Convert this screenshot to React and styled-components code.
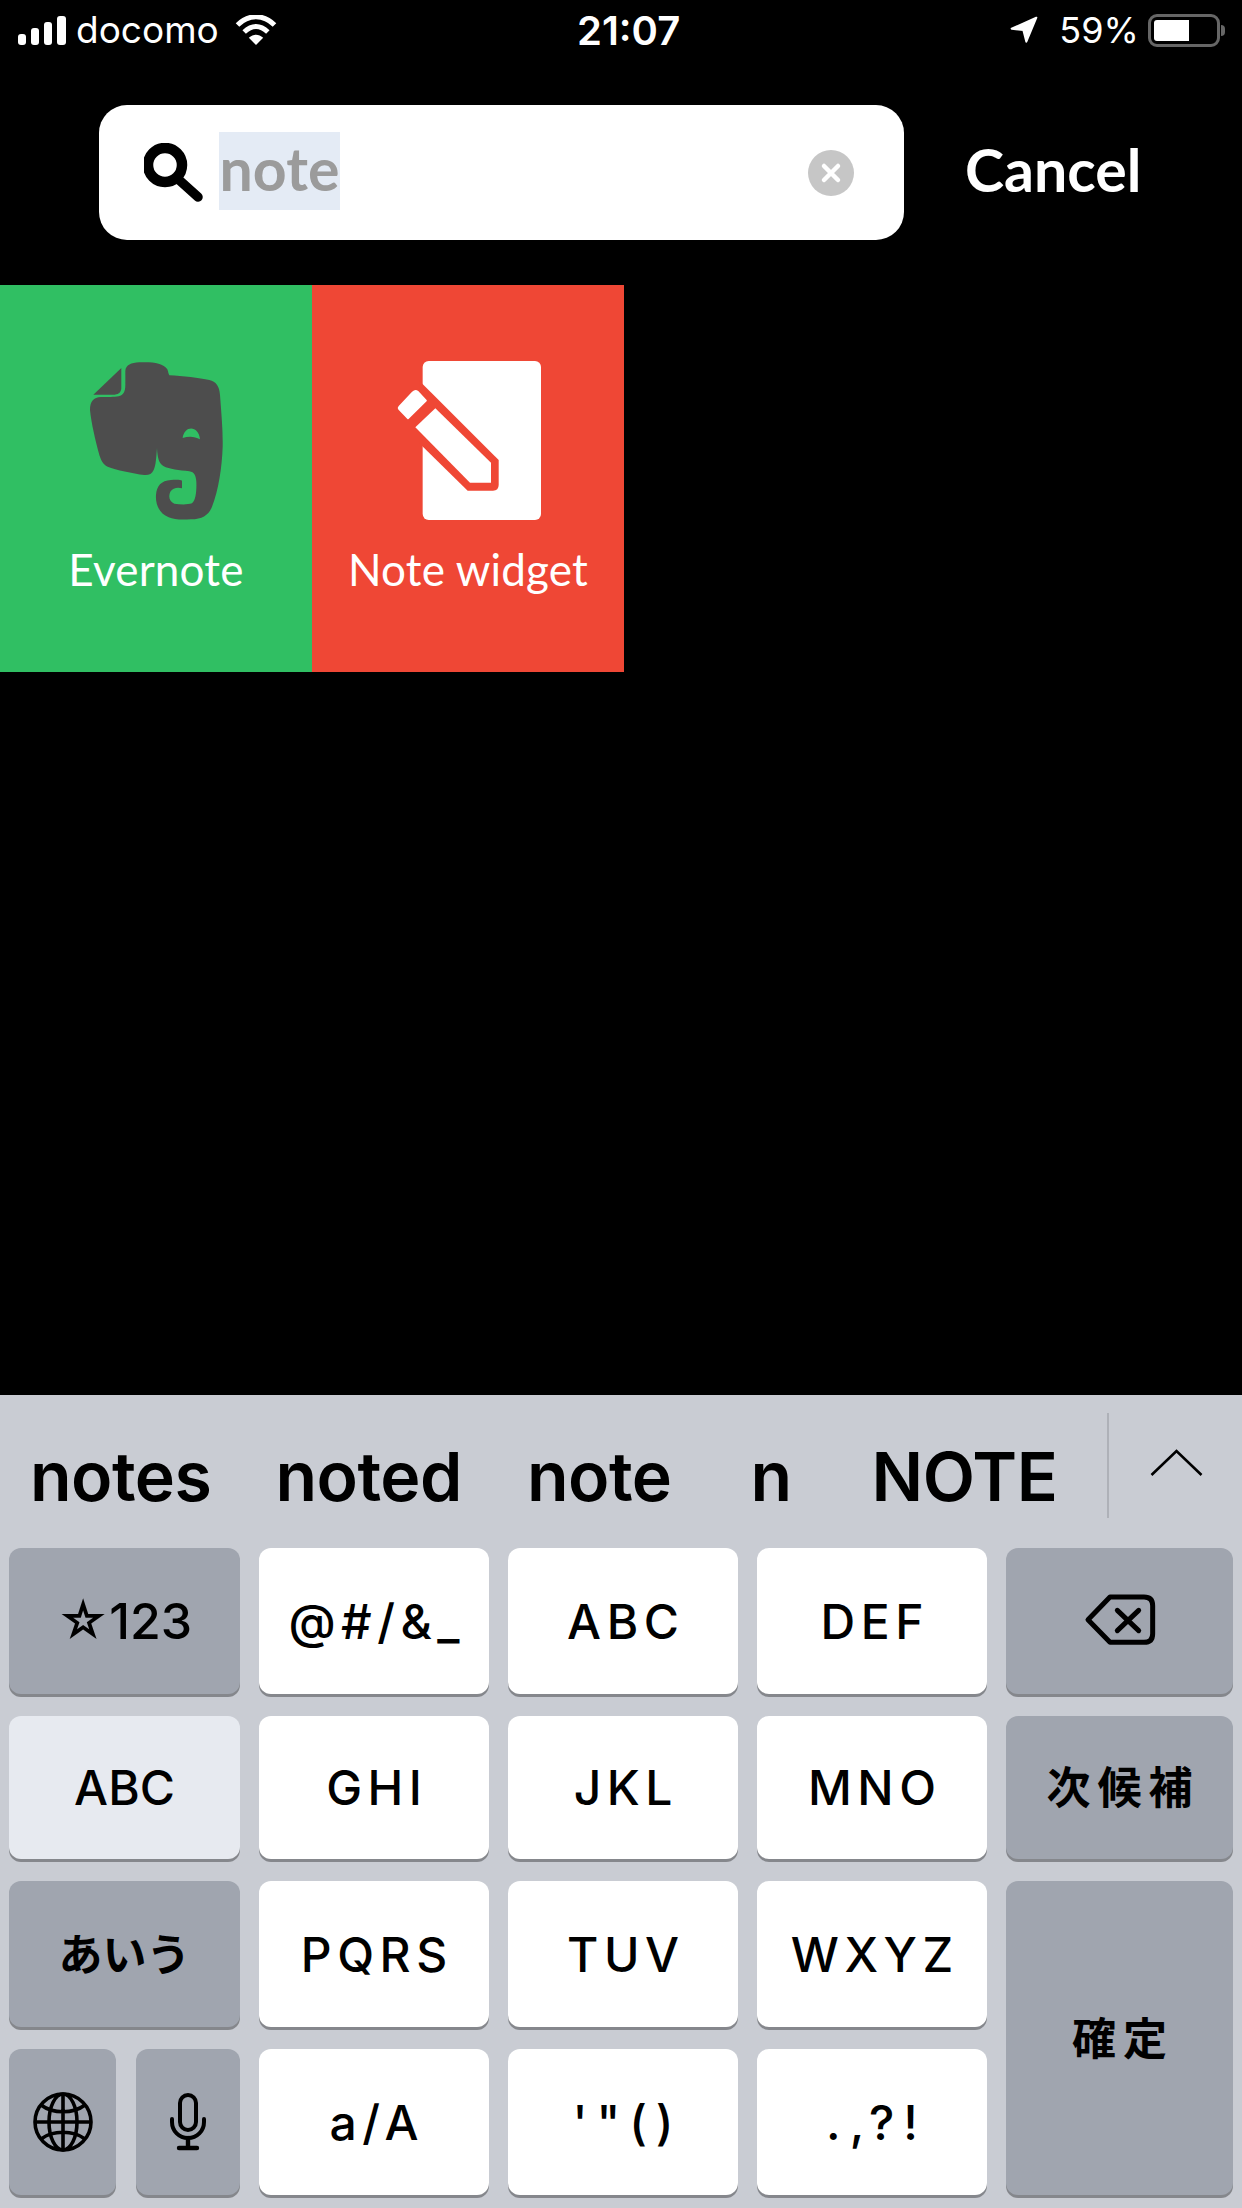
import React from 'react';
import styled, { createGlobalStyle } from 'styled-components';

const GlobalStyle = createGlobalStyle`
  html, body {
    margin: 0;
    padding: 0;
    background: #000;
    font-family: Inter, "Noto Sans CJK JP", sans-serif;
  }
`;

const suggestions = [
  { text: 'notes', gap: 30 },
  { text: 'noted', gap: 64 },
  { text: 'note', gap: 65 },
  { text: 'n', gap: 79 },
  { text: 'NOTE', gap: 80 },
];

const SignalIcon = () => (
  <svg width="48" height="29" viewBox="0 0 48 29">
    <rect x="0" y="18" width="8" height="11" rx="3" fill="#fff" />
    <rect x="13" y="12" width="8" height="17" rx="3" fill="#fff" />
    <rect x="26" y="6" width="8" height="23" rx="3" fill="#fff" />
    <rect x="39" y="0" width="9" height="29" rx="3" fill="#fff" />
  </svg>
);

const WifiIcon = () => (
  <svg width="42" height="30" viewBox="0 0 125 90">
    <path d="M7 30C40 -3 85 -3 118 30" fill="none" stroke="#fff" strokeWidth="15" />
    <path d="M27 51C50 29 75 29 98 51" fill="none" stroke="#fff" strokeWidth="15" />
    <path d="M62.5 90L41 68C55 56 70 56 84 68Z" fill="#fff" />
  </svg>
);

const LocationIcon = () => (
  <svg width="30" height="30" viewBox="0 0 90 90">
    <path d="M82 8L8 41L43 45L52 80Z" fill="#fff" stroke="#fff" strokeWidth="6" strokeLinejoin="round" />
  </svg>
);

const SearchIcon = () => (
  <svg width="60" height="60" viewBox="0 0 60 60">
    <circle cx="21" cy="22" r="17" fill="none" stroke="#000" strokeWidth="10.5" />
    <path d="M34 36L54 54" stroke="#000" strokeWidth="9.5" strokeLinecap="round" />
  </svg>
);

const ClearIcon = () => (
  <svg width="46" height="46" viewBox="0 0 46 46">
    <circle cx="23" cy="23" r="23" fill="#c6c6c6" />
    <path d="M16 16L30 30M30 16L16 30" stroke="#fff" strokeWidth="4.5" strokeLinecap="round" />
  </svg>
);

const ElephantIcon = () => (
  <svg width="160" height="180" viewBox="0 0 480 540">
    <path
      fillRule="evenodd"
      fill="#4d4d4d"
      d="M148 62C150 45 165 38 190 37C225 35 262 38 274 58C277 65 277 72 280 76C320 78 370 84 400 90C420 95 430 108 432 135C436 190 441 240 440 290C438 350 428 420 408 470C398 495 380 508 345 508C320 509 295 510 278 502C250 490 238 465 240 435C242 408 255 392 285 390C300 389 315 389 318 392L318 415C305 411 290 414 283 425C277 438 279 455 295 461C315 464 335 464 348 460C360 452 362 420 361 395C360 378 355 366 340 364C310 360 280 358 262 348C248 340 244 320 243 294C241 320 240 345 233 360C228 372 218 376 205 375C170 370 120 360 95 350C80 343 75 330 70 315C58 270 46 220 42 180C42 155 52 142 75 141C95 140 115 142 128 139C142 136 148 125 148 105Z M320 264C325 225 368 225 372 268C355 258 338 258 320 264Z"
    />
    <path d="M136 54L136 112C136 126 130 133 116 134L52 134Z" fill="#4d4d4d" />
  </svg>
);

const NoteIcon = () => (
  <svg width="165" height="180" viewBox="0 0 495 540">
    <rect x="110" y="33" width="355" height="477" rx="18" fill="#fff" />
    <path d="M100 92L338 330L338 405Q338 422 321 422L245 422L100 280Z" fill="#ef4735" />
    <path d="M148 175L315 338L315 398L252 398L88 232Z" fill="#fff" />
    <path
      d="M40 170L80 127Q88 120 95 125L120 152L66 205L40 178Q36 174 40 170Z"
      fill="#fff"
      stroke="#fff"
      strokeWidth="5"
      strokeLinejoin="round"
    />
  </svg>
);

const ChevronIcon = () => (
  <svg width="53" height="27" viewBox="0 0 53 27">
    <path d="M1.5 26L26.5 2L51.5 26" fill="none" stroke="#000" strokeWidth="2.6" />
  </svg>
);

const BackspaceIcon = () => (
  <svg width="120" height="90" viewBox="0 0 360 270">
    <path
      d="M150 57L252 57Q278 57 278 83L278 167Q278 193 252 193L150 193L84 125Z"
      fill="none"
      stroke="#000"
      strokeWidth="15"
      strokeLinejoin="round"
    />
    <path d="M172 97L236 158M236 97L172 158" stroke="#000" strokeWidth="15" strokeLinecap="round" />
  </svg>
);

const GlobeIcon = () => (
  <svg width="64" height="64" viewBox="0 0 64 64" fill="none" stroke="#000" strokeWidth="3.6">
    <circle cx="32" cy="32" r="28" />
    <ellipse cx="32" cy="32" rx="14" ry="28" />
    <path d="M32 4V60M4 32H60M10 15C22 24 42 24 54 15M10 49C22 40 42 40 54 49" />
  </svg>
);

const MicIcon = () => (
  <svg width="38" height="58" viewBox="0 0 38 58" fill="none" stroke="#000" strokeWidth="4">
    <rect x="11" y="2" width="16" height="35" rx="8" />
    <path d="M3 26V29C3 38 10 45 19 45C28 45 35 38 35 29V26" strokeLinecap="round" />
    <path d="M19 45V55M10 55H28" strokeWidth="4.4" strokeLinecap="round" />
  </svg>
);

const App = () => {
  return (
    <Page>
      <GlobalStyle />
      <StatusBar>
        <StatusLeft>
          <SignalIcon />
          <Carrier>docomo</Carrier>
          <WifiSlot>
            <WifiIcon />
          </WifiSlot>
        </StatusLeft>
        <Clock>21:07</Clock>
        <StatusRight>
          <LocationIcon />
          <Percent>59%</Percent>
          <Battery>
            <BatteryFill />
          </Battery>
          <BatteryCap />
        </StatusRight>
      </StatusBar>

      <SearchRow>
        <SearchBox>
          <SearchIcon />
          <Selected>note</Selected>
          <ClearSlot>
            <ClearIcon />
          </ClearSlot>
        </SearchBox>
        <CancelText>Cancel</CancelText>
      </SearchRow>

      <Tiles>
        <Tile $color="#30bf63">
          <ElephantIcon />
          <TileLabel>Evernote</TileLabel>
        </Tile>
        <Tile $color="#ef4735">
          <NoteIcon />
          <TileLabel>Note widget</TileLabel>
        </Tile>
      </Tiles>

      <Keyboard>
        <SuggestionBar>
          <SuggestionList>
            {suggestions.map((s) => (
              <Suggestion key={s.text} $gap={s.gap}>
                {s.text}
              </Suggestion>
            ))}
          </SuggestionList>
          <Divider />
          <ChevronSlot>
            <ChevronIcon />
          </ChevronSlot>
        </SuggestionBar>

        <KeyGrid>
          <Key $tone="dark" $flat>☆123</Key>
          <Key $wide>@#/&amp;_</Key>
          <Key $wide>ABC</Key>
          <Key $wide>DEF</Key>
          <Key $tone="dark"><BackspaceSlot><BackspaceIcon /></BackspaceSlot></Key>

          <Key $tone="light">ABC</Key>
          <Key $wide>GHI</Key>
          <Key $wide>JKL</Key>
          <Key $wide>MNO</Key>
          <Key $tone="dark" $cjk $wide>次候補</Key>

          <Key $tone="dark" $cjk>あいう</Key>
          <Key $wide>PQRS</Key>
          <Key $wide>TUV</Key>
          <Key $wide>WXYZ</Key>
          <Key $tone="dark" $cjk $wide $tall>確定</Key>

          <KeyPair>
            <Key $tone="dark"><GlobeIcon /></Key>
            <Key $tone="dark"><MicIcon /></Key>
          </KeyPair>
          <Key $wide>a/A</Key>
          <Key $wide $loose>'"()</Key>
          <Key $wide $loose>.,?!</Key>
        </KeyGrid>
      </Keyboard>
    </Page>
  );
};

export default App;

const Page = styled.div`
  width: 1242px;
  height: 2208px;
  overflow: hidden;
  background: #000;
  display: flex;
  flex-direction: column;
`;

const StatusBar = styled.div`
  height: 60px;
  padding-left: 18px;
  display: flex;
  align-items: center;
  color: #fff;
  font-size: 34px;
`;

const StatusLeft = styled.div`
  width: 559px;
  display: flex;
  align-items: center;
`;

const Carrier = styled.span`
  margin-left: 10px;
  font-size: 37px;
  line-height: 60px;
`;

const WifiSlot = styled.span`
  margin-left: 16px;
  display: flex;
`;

const Clock = styled.span`
  font-weight: 600;
  font-size: 40px;
`;

const StatusRight = styled.div`
  margin-left: 329px;
  display: flex;
  align-items: center;
`;

const Percent = styled.span`
  margin-left: 20px;
  font-size: 36px;
`;

const Battery = styled.div`
  margin-left: 9px;
  box-sizing: border-box;
  width: 72px;
  height: 33px;
  padding: 3px;
  border: 3px solid #666;
  border-radius: 9px;
`;

const BatteryFill = styled.div`
  width: 35px;
  height: 100%;
  background: #fff;
  border-radius: 3px 0 0 3px;
`;

const BatteryCap = styled.div`
  margin-left: 1px;
  width: 4px;
  height: 11px;
  background: #666;
  border-radius: 0 4px 4px 0;
`;

const SearchRow = styled.div`
  margin-top: 45px;
  padding-left: 99px;
  display: flex;
  align-items: center;
`;

const SearchBox = styled.div`
  box-sizing: border-box;
  width: 805px;
  height: 135px;
  padding: 0 50px 0 45px;
  background: #fff;
  border-radius: 28px;
  display: flex;
  align-items: center;
`;

const Selected = styled.span`
  margin-left: 15px;
  width: 121px;
  height: 78px;
  margin-top: -3px;
  background: #e4ebf5;
  color: #9b9b9b;
  font-family: Lato, sans-serif;
  font-weight: 700;
  font-size: 59px;
  line-height: 74px;
  text-align: center;
`;

const ClearSlot = styled.span`
  margin-left: auto;
  display: flex;
`;

const CancelText = styled.span`
  margin-left: 61px;
  margin-top: -6px;
  color: #fff;
  font-family: Lato, sans-serif;
  font-weight: 700;
  font-size: 59px;
`;

const Tiles = styled.div`
  margin-top: 45px;
  display: flex;
`;

const Tile = styled.div`
  box-sizing: border-box;
  width: 312px;
  height: 387px;
  padding-top: 65px;
  background: ${(p) => p.$color};
  display: flex;
  flex-direction: column;
  align-items: center;
`;

const TileLabel = styled.div`
  margin-top: 14px;
  color: #fff;
  font-family: Lato, sans-serif;
  font-size: 44px;
  letter-spacing: 0.2px;
  line-height: 50px;
  white-space: nowrap;
`;

const Keyboard = styled.div`
  margin-top: auto;
  height: 813px;
  background: #c9ccd3;
`;

const SuggestionBar = styled.div`
  height: 153px;
  display: flex;
  align-items: flex-start;
`;

const SuggestionList = styled.div`
  width: 1107px;
  height: 153px;
  display: flex;
  align-items: center;
`;

const Suggestion = styled.span`
  margin-left: ${(p) => p.$gap}px;
  margin-top: 8px;
  font-weight: 600;
  font-size: 68px;
  letter-spacing: -0.5px;
  color: #000;
`;

const Divider = styled.div`
  margin-top: 18px;
  width: 2px;
  height: 105px;
  background: #aeb1b8;
`;

const ChevronSlot = styled.div`
  margin-top: 54px;
  margin-left: 41px;
  display: flex;
`;

const KeyGrid = styled.div`
  padding-left: 9px;
  display: grid;
  grid-template-columns: 231px 230px 230px 230px 227px;
  grid-template-rows: 149px 146px 149px 149px;
  column-gap: 19px;
  row-gap: 19px;
`;

const toneColors = { white: '#fff', dark: '#a0a5af', light: '#e7eaf0' };

const letterSpacing = (p) => {
  if (p.$loose) return 9;
  if (p.$wide) return p.$cjk ? 7 : 5.5;
  return 0;
};

const Key = styled.div.attrs((p) => ({ $tone: p.$tone || 'white' }))`
  box-sizing: border-box;
  height: calc(100% - 3px);
  flex: ${(p) => (p.$tone === 'dark' ? '1 1 0' : 'none')};
  grid-row: ${(p) => (p.$tall ? 'span 2' : 'auto')};
  padding-left: ${letterSpacing}px;
  padding-bottom: ${(p) => (p.$cjk ? 5 : 0)}px;
  background: ${(p) => toneColors[p.$tone]};
  border-radius: 12px;
  box-shadow: 0 3px 0 #85878c;
  display: flex;
  align-items: center;
  justify-content: center;
  color: #000;
  font-family: ${(p) => (p.$cjk ? '"Noto Sans CJK JP", sans-serif' : 'Inter, sans-serif')};
  font-weight: ${(p) => (p.$cjk ? 600 : 500)};
  font-size: ${(p) => (p.$cjk ? '44px' : p.$flat ? '50px' : '48px')};
  letter-spacing: ${letterSpacing}px;
`;

const BackspaceSlot = styled.span`
  margin-top: 4px;
  display: flex;
`;

const KeyPair = styled.div`
  display: flex;
  gap: 20px;
  height: 100%;

  & > :first-child {
    flex: 0 0 107px;
  }
`;
